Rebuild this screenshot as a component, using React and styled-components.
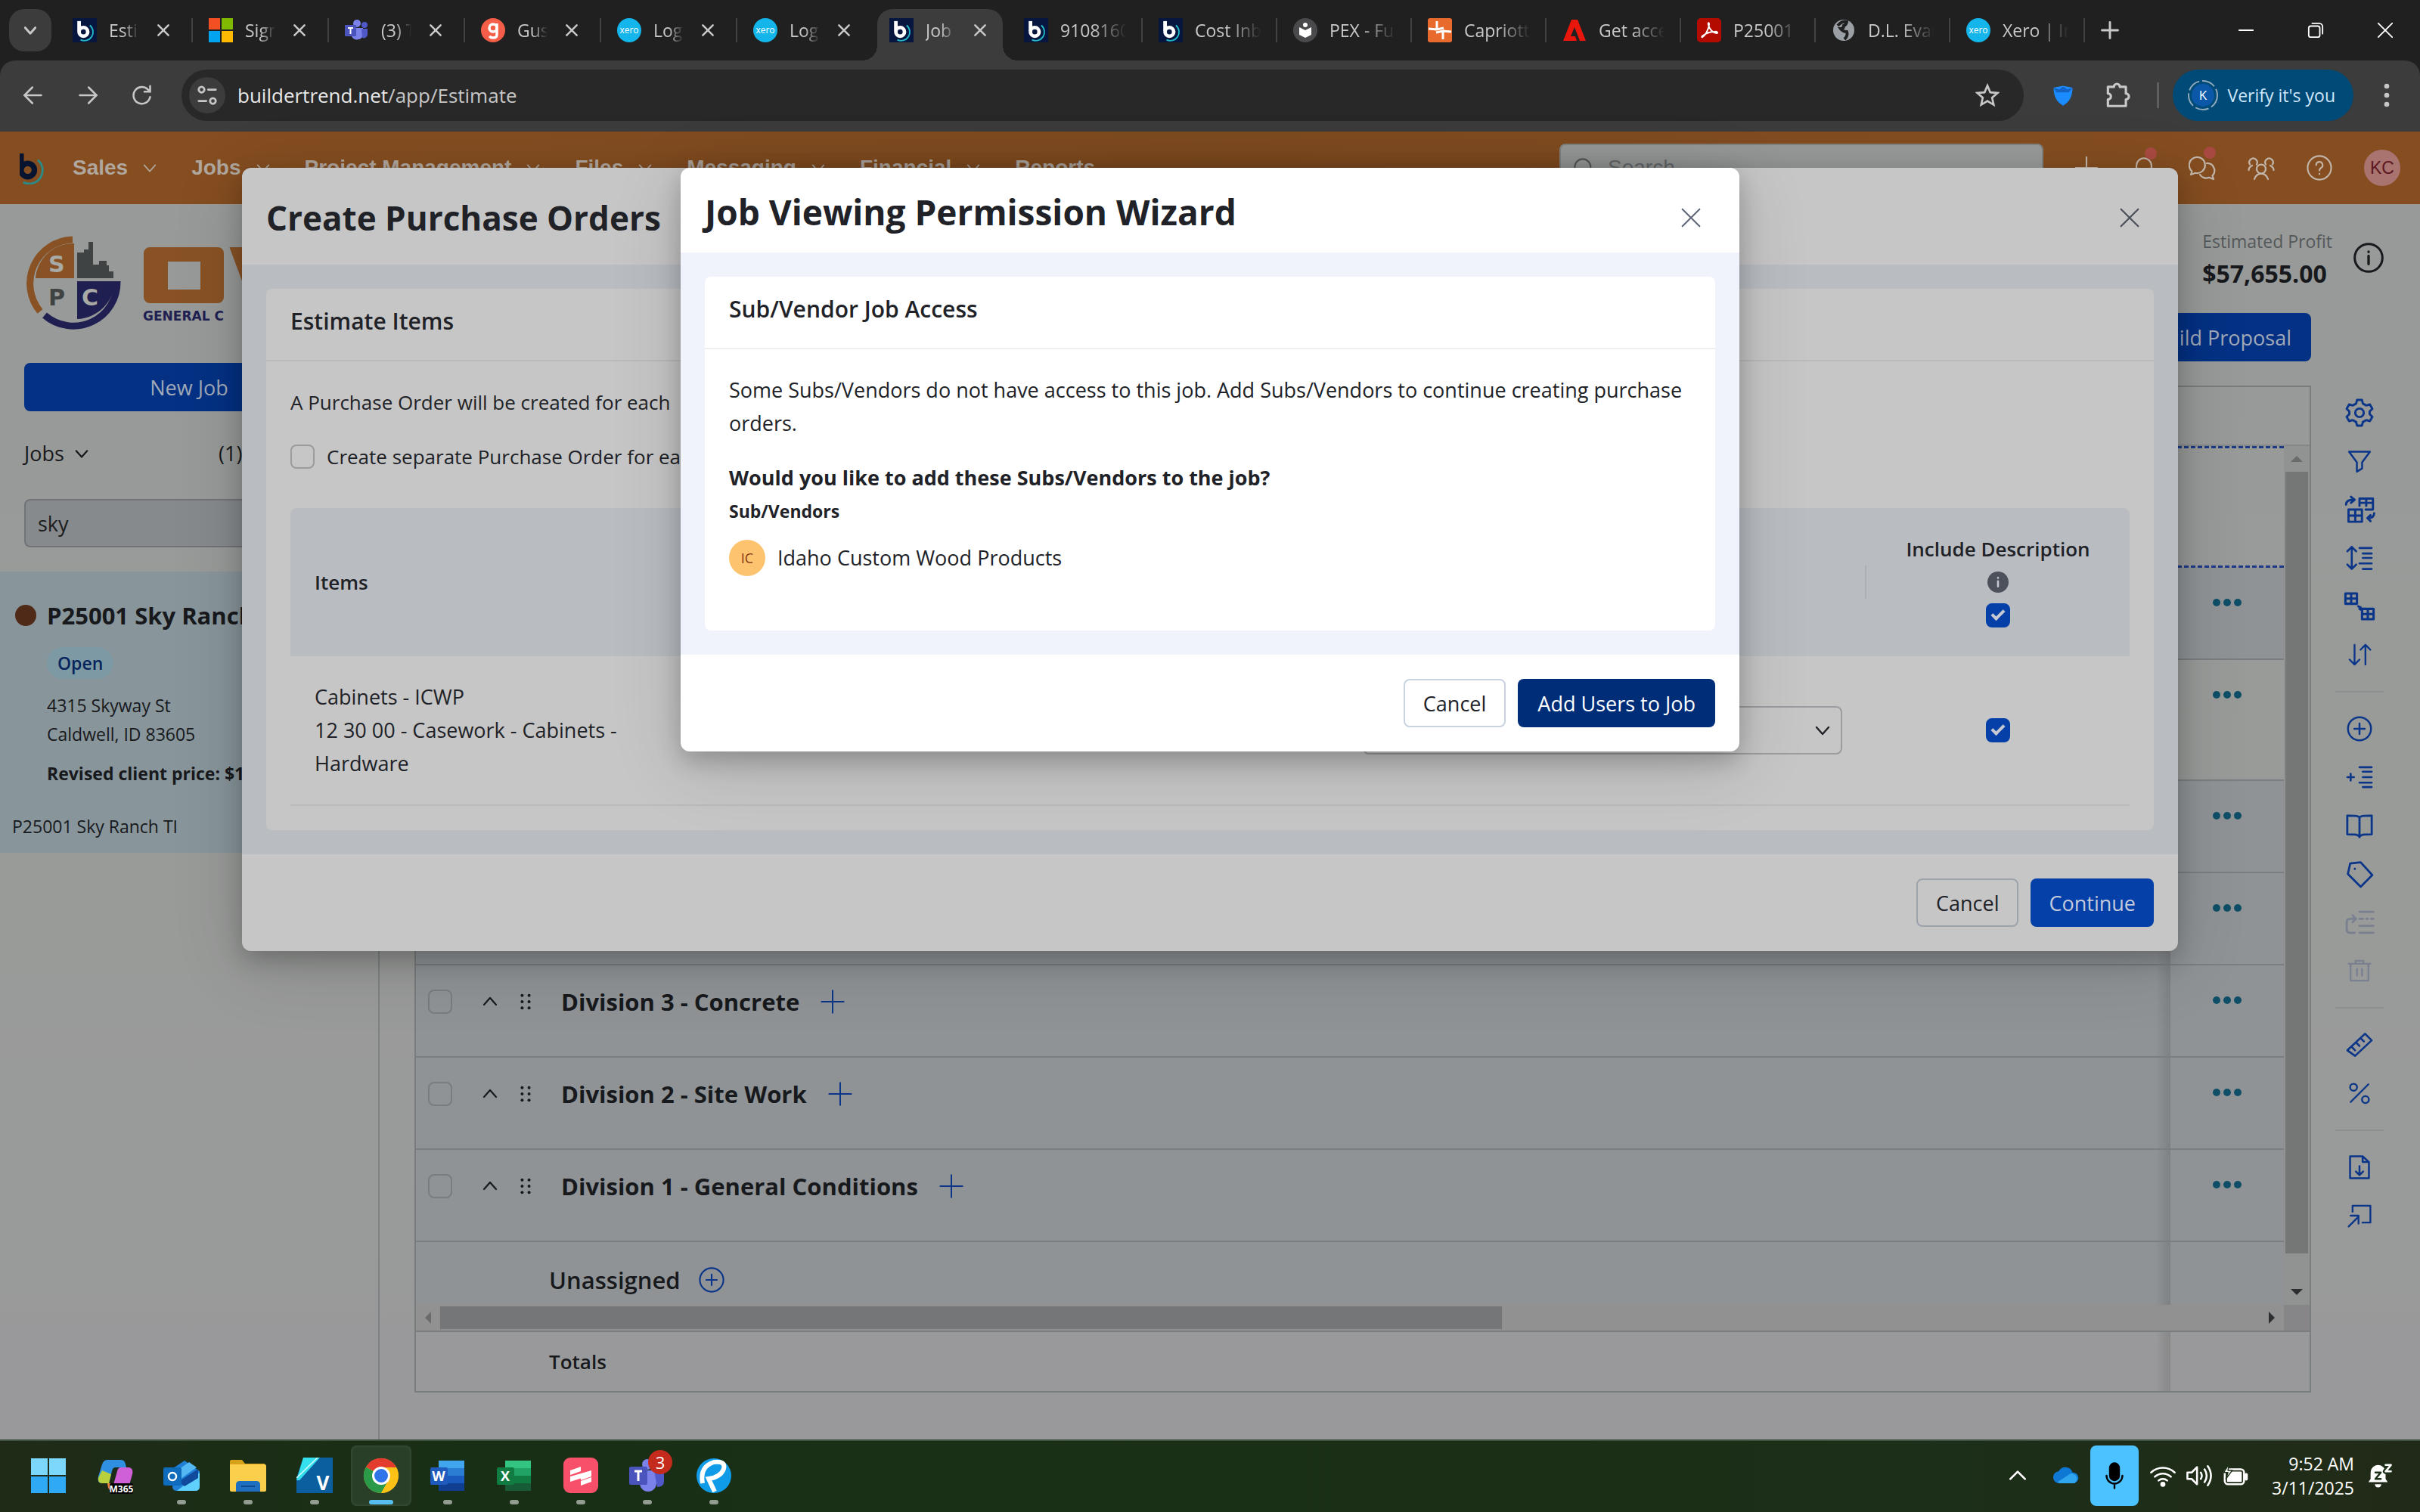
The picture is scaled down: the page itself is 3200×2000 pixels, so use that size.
import React from 'react';
import styled, { createGlobalStyle, css } from 'styled-components';

const GlobalStyle = createGlobalStyle`
  *, *::before, *::after { box-sizing: border-box; }
  body { margin: 0; background: #999b99; }
  body, button, input, select { font-family: 'Open Sans', 'Noto Sans', sans-serif; }
  h1, h2, h3, p { margin: 0; }
  button { margin: 0; padding: 0; border: 0; background: none; color: inherit; }
`;

const Screen = styled.div`
  display: flex;
  flex-direction: column;
  min-height: 100vh;
  overflow: hidden;
  font-size: 27px;
  line-height: 44px;
  color: #17191c;
`;

const IconSvg = styled.svg`
  display: block;
  flex: none;
  fill: none;
  stroke: currentColor;
  stroke-linecap: round;
  stroke-linejoin: round;
`;

function Icon({ size = 32, w = 1.5, children, box = '0 0 24 24', ...rest }) {
  return (
    <IconSvg width={size} height={size} viewBox={box} strokeWidth={w} aria-hidden="true" {...rest}>
      {children}
    </IconSvg>
  );
}

/* ---------- browser window ---------- */

const TabStrip = styled.div`
  display: flex;
  align-items: flex-start;
  height: 80px;
  padding: 12px 0 0 12px;
  background: #202020;
  color: #c9c9c9;
`;

const TabSearch = styled.button`
  display: grid;
  place-items: center;
  width: 56px;
  height: 56px;
  margin-right: 12px;
  border-radius: 20px;
  background: #3c3c3c;
`;

const Tab = styled.div`
  position: relative;
  display: flex;
  align-items: center;
  width: ${(p) => (p.$wide || p.$active ? 166 : 168)}px;
  height: 68px;
  padding: 0 0 12px 16px;
  border-radius: 20px 20px 0 0;
  background: ${(p) => (p.$active ? '#3c3c3c' : 'transparent')};
  ${(p) => p.$active && css`
    &::before, &::after {
      content: '';
      position: absolute;
      bottom: 0;
      width: 20px;
      height: 20px;
    }
    &::before { left: -20px; background: radial-gradient(circle at 0 0, #202020 20px, #3c3c3c 20px); }
    &::after { right: -20px; background: radial-gradient(circle at 100% 0, #202020 20px, #3c3c3c 20px); }
  `}
`;

const TabLabel = styled.span`
  flex: none;
  width: ${(p) => (p.$wide ? 88 : 40)}px;
  margin-left: 16px;
  overflow: hidden;
  white-space: nowrap;
  font-size: 23px;
  line-height: 32px;
  mask-image: linear-gradient(90deg, #000 50%, transparent);
`;

const TabClose = styled.button`
  margin-left: 22px;
`;

const TabGap = styled.span`
  width: 2px;
  height: 32px;
  margin: 12px 5px 0;
  background: ${(p) => (p.$hidden ? 'transparent' : '#414141')};
`;

const NewTab = styled.button`
  display: grid;
  place-items: center;
  width: 56px;
  height: 56px;
`;

const WindowButtons = styled.div`
  display: flex;
  margin-left: auto;
  color: #fff;
`;

const WindowButton = styled.button`
  display: grid;
  place-items: center;
  width: 92px;
  height: 56px;
`;

const ToolbarBack = styled.div`
  background: #202020;
`;

const Toolbar = styled.div`
  display: flex;
  align-items: center;
  padding: 12px 0 14px 8px;
  border-radius: 20px 20px 0 0;
  background: #3c3c3c;
  color: #c7c7c7;
`;

const ToolButton = styled.button`
  display: grid;
  place-items: center;
  width: ${(p) => (p.$wide ? 88 : 72)}px;
  height: 68px;
`;

const Omnibox = styled.div`
  display: flex;
  flex: 1;
  align-items: center;
  height: 68px;
  margin: 0 16px;
  padding: 0 32px 0 10px;
  border-radius: 34px;
  background: #282828;
`;

const SiteInfo = styled.button`
  display: grid;
  place-items: center;
  width: 48px;
  height: 48px;
  margin-right: 16px;
  border-radius: 50%;
  background: #3c3c3c;
`;

const Url = styled.div`
  flex: 1;
  font-size: 26px;
  color: #c7c7c7;
  b { font-weight: 400; color: #e9e9e9; }
`;

const ToolDivider = styled.span`
  width: 3px;
  height: 34px;
  margin: 0 18px 0 16px;
  background: #5f5f5f;
`;

const Verify = styled.button`
  display: flex;
  align-items: center;
  gap: 12px;
  height: 68px;
  padding: 0 24px 0 20px;
  border-radius: 34px;
  background: #004a77;
  color: #cfe7fb;
  font-size: 23px;
`;

/* ---------- application ---------- */

const AppArea = styled.div`
  position: relative;
  display: flex;
  flex: 1;
  flex-direction: column;
  background: linear-gradient(#979a98, #999b99 60%, #99999b);
`;

const Nav = styled.nav`
  display: flex;
  align-items: center;
  height: 96px;
  padding: 0 26px;
  background: linear-gradient(90deg, #864e20, #7f4b20 50%, #864e20);
  color: #b0a79f;
  font-family: 'Liberation Sans', sans-serif;
`;

const NavLinks = styled.div`
  display: flex;
  flex: 1;
  gap: 44px;
  margin-left: 34px;
`;

const NavLink = styled.a`
  display: flex;
  align-items: center;
  gap: 18px;
  color: inherit;
  font-size: 28px;
  font-weight: 700;
  text-decoration: none;
`;

const SearchBox = styled.label`
  display: flex;
  align-items: center;
  gap: 16px;
  width: 640px;
  height: 64px;
  padding-left: 16px;
  border: 2px solid #828481;
  border-radius: 8px;
  background: #979a98;
  color: #55595c;
  input {
    flex: 1;
    min-width: 0;
    border: 0;
    background: none;
    color: inherit;
    font-family: 'Liberation Sans', sans-serif;
    font-size: 28px;
  }
  input::placeholder { color: #66696c; opacity: 1; }
`;

const NavIcons = styled.div`
  display: flex;
  align-items: center;
  gap: 42px;
  margin-left: 40px;
`;

const NavButton = styled.button`
  position: relative;
  color: #c2b5aa;
  ${(p) => p.$alert && css`
    &::after {
      content: '';
      position: absolute;
      top: -10px;
      right: 0;
      width: 16px;
      height: 16px;
      border-radius: 50%;
      background: #a94a42;
    }
  `}
`;

const UserBadge = styled.button`
  width: 48px;
  height: 48px;
  border-radius: 50%;
  background: #a97370;
  color: #5c1720;
  font-family: 'Liberation Sans', sans-serif;
  font-size: 23px;
`;

const Columns = styled.div`
  display: flex;
  flex: 1;
`;

const Sidebar = styled.aside`
  width: 502px;
  padding-top: 42px;
  border-right: 2px solid #7f8283;
`;

const SidePad = styled.div`
  padding: 0 32px;
`;

const Logo = styled.svg`
  display: block;
  width: 436px;
  height: 128px;
  margin-bottom: 40px;
`;

const Primary = styled.button`
  height: 64px;
  padding: 0 ${(p) => (p.$padding || 24)}px;
  border-radius: 8px;
  background: ${(p) => p.$bg};
  color: ${(p) => p.$fg};
  font-size: 27px;
  ${(p) => p.$block && 'width: 100%;'}
`;

const JobsHead = styled.div`
  display: flex;
  margin: 36px 0 40px;
  line-height: 40px;
  span:first-child { display: flex; align-items: center; gap: 12px; width: 257px; }
`;

const JobSearch = styled.input`
  display: block;
  width: 100%;
  height: 64px;
  margin-bottom: 32px;
  padding: 0 16px;
  border: 2px solid #707476;
  border-radius: 8px;
  background: #868a8d;
  color: #1b1d20;
  font-size: 27px;
`;

const JobCard = styled.article`
  padding: 36px 16px 16px;
  background: #88959b;
  font-size: 23px;
  line-height: 38px;
`;

const JobTitle = styled.h2`
  display: flex;
  align-items: center;
  gap: 14px;
  margin-left: 4px;
  font-size: 31px;
  line-height: 44px;
  white-space: nowrap;
  &::before {
    content: '';
    width: 28px;
    height: 28px;
    border-radius: 50%;
    background: #4f2a16;
  }
`;

const JobDetail = styled.div`
  padding: 20px 0 0 46px;
  strong { display: block; margin: 14px 0 32px; }
`;

const Pill = styled.span`
  display: inline-block;
  margin-bottom: 16px;
  padding: 0 14px;
  border-radius: 21px;
  background: #7d99a3;
  color: #06245c;
  font-weight: 600;
  line-height: 42px;
  vertical-align: top;
`;

const Main = styled.main`
  display: flex;
  flex: 1;
  flex-direction: column;
  min-width: 0;
  padding: 28px 16px 56px 46px;
`;

const Summary = styled.div`
  display: flex;
  align-items: center;
  justify-content: flex-end;
  gap: 28px;
  height: 86px;
  padding-right: 32px;
  dl, dd { margin: 0; }
  dt { color: #55585b; font-size: 23px; line-height: 42px; }
  dd { font-size: 32px; font-weight: 700; }
`;

const Actions = styled.div`
  display: flex;
  justify-content: flex-end;
  margin: 30px 128px 32px 0;
`;

const Workspace = styled.div`
  display: flex;
`;

const Sheet = styled.div`
  flex: 1;
  min-width: 0;
  border: 2px solid #7a7d7e;
`;

const SheetHead = styled.div`
  height: 78px;
  border-bottom: 2px solid #858888;
`;

const SheetBody = styled.div`
  display: flex;
`;

const Grid = styled.table`
  flex: 1;
  border-collapse: collapse;
  td { padding: 0; vertical-align: top; }
`;

const GridRow = styled.tr`
  height: ${(p) => p.$height}px;
  background: ${(p) => (p.$plain ? 'transparent' : '#8f9396')};
  border-bottom: ${(p) => (p.$last ? 0 : 2)}px solid #7a7e82;
  ${(p) => p.$drop && css`
    border-top: 3px dashed #1c3a86;
    border-bottom: 3px dashed #1c3a86;
  `}
`;

const LabelCell = styled.td`
  background: linear-gradient(90deg, rgba(0, 0, 0, 0), rgba(0, 0, 0, 0.12)) right / 20px 100% no-repeat;
`;

const MoreCell = styled.td`
  width: 150px;
`;

const RowLine = styled.div`
  display: flex;
  align-items: center;
  padding: 26px 0 0 16px;
`;

const RowTitle = styled.span`
  margin: 0 28px 0 36px;
  font-size: 31px;
  font-weight: 700;
`;

const LooseTitle = styled.div`
  display: flex;
  align-items: center;
  gap: 24px;
  padding: 28px 0 0 176px;
  font-size: 31px;
  font-weight: 600;
`;

const RowButton = styled.button`
  margin-left: ${(p) => p.$gap || 0}px;
  color: ${(p) => p.$color || '#17191c'};
`;

const MoreButton = styled.button`
  display: block;
  margin: 26px auto 0;
  color: #0e4f67;
`;

const VScroll = styled.div`
  display: flex;
  flex-direction: column;
  align-items: center;
  width: 34px;
  background: #919393;
`;

const HScroll = styled.div`
  display: flex;
  height: 34px;
  background: #919192;
`;

const Arrow = styled.span`
  display: grid;
  place-items: center;
  width: 32px;
  height: 34px;
  color: ${(p) => (p.$dim ? '#6a6b6b' : '#2d2e2f')};
`;

const VThumb = styled.span`
  flex: 1;
  width: 30px;
  margin-bottom: 34px;
  background: #757676;
`;

const HThumb = styled.span`
  flex: 7;
  margin: 2px 0;
  background: #757677;
`;

const HTrack = styled.span`
  flex: 5;
`;

const Corner = styled.span`
  width: 34px;
  background: #868688;
`;

const Totals = styled.div`
  display: flex;
  height: 80px;
  border-top: 2px solid #7a7d7e;
  font-size: 26px;
  font-weight: 600;
  line-height: 78px;
`;

const TotalsLabel = styled.div`
  flex: 1;
  padding-left: 176px;
  background: linear-gradient(90deg, rgba(0, 0, 0, 0), rgba(0, 0, 0, 0.12)) right / 20px 100% no-repeat;
`;

const TotalsEnd = styled.div`
  width: 184px;
`;

const Rail = styled.div`
  display: flex;
  flex-direction: column;
  align-items: center;
  width: 128px;
  padding-top: 4px;
  color: #0b3588;
`;

const RailButton = styled.button`
  display: grid;
  place-items: center;
  width: 64px;
  height: 64px;
  color: ${(p) => (p.$off ? '#7a8090' : 'inherit')};
`;

const RailLine = styled.span`
  width: 64px;
  height: 2px;
  margin: 16px 0;
  background: #8c8f90;
`;

const Checkbox = styled.input`
  appearance: none;
  position: relative;
  flex: none;
  display: block;
  width: 32px;
  height: 32px;
  margin: 0;
  border: 2px solid ${(p) => p.$line || '#9b9b9b'};
  border-radius: 8px;
  background: transparent;
  &:checked { border-color: #0440a8; background: #0440a8; }
  &:checked::after {
    content: '';
    position: absolute;
    left: 9px;
    top: 3px;
    width: 10px;
    height: 17px;
    border: solid #c6c9d2;
    border-width: 0 4px 4px 0;
    transform: rotate(45deg);
  }
`;

/* ---------- dialogs ---------- */

const Layer = styled.div`
  position: absolute;
  inset: 0;
  padding: 48px 320px 0;
`;

const Dialog = styled.section`
  max-width: ${(p) => p.$max || 'none'};
  margin: 0 auto;
  border-radius: 12px;
  background: ${(p) => p.$bg};
  color: #202227;
  box-shadow: 0 12px 32px rgba(0, 0, 0, 0.22), 0 18px 96px rgba(0, 0, 0, 0.14);
`;

const DialogHead = styled.header`
  display: flex;
  align-items: center;
  justify-content: space-between;
  height: ${(p) => p.$height}px;
  padding: 4px 32px 0;
  h1 { font-size: ${(p) => p.$size}px; line-height: 64px; }
`;

const CloseButton = styled.button`
  display: grid;
  place-items: center;
  width: 64px;
  height: 64px;
  margin-top: ${(p) => (p.$low ? 16 : 0)}px;
  color: ${(p) => p.$color};
`;

const DialogBody = styled.div`
  padding: 32px;
  background: ${(p) => p.$bg};
`;

const Card = styled.div`
  border-radius: 8px;
  background: ${(p) => p.$bg};
`;

const CardHead = styled.h2`
  height: 96px;
  padding: 0 32px;
  border-bottom: 2px solid ${(p) => p.$line};
  font-size: 30px;
  font-weight: 600;
  line-height: 86px;
`;

const CardBody = styled.div`
  padding: 32px 32px ${(p) => p.$bottom}px;
`;

const Note = styled.p`
  font-size: 26px;
`;

const Tick = styled.label`
  display: flex;
  align-items: center;
  gap: 16px;
  margin: 28px 0 46px;
  font-size: 26px;
`;

const ItemsTable = styled.table`
  width: 100%;
  border-spacing: 0;
  table-layout: fixed;
  th {
    height: 196px;
    padding: 32px;
    background: #b9bdc2;
    font-size: 26px;
    font-weight: 600;
    text-align: left;
  }
  th:first-child { border-radius: 8px 0 0 0; }
  th:last-child { border-radius: 0 8px 0 0; }
  td {
    padding: 32px;
    border-bottom: 2px solid #b9babb;
  }
`;

const Col = styled.col`
  width: ${(p) => (p.$width ? `${p.$width}px` : 'auto')};
`;

const Divider = styled.span`
  display: block;
  width: 2px;
  height: 44px;
  margin: 0 -32px 0 auto;
  background: #abafb4;
`;

const CenterStack = styled.div`
  display: grid;
  grid-auto-rows: 44px;
  place-items: center;
  white-space: nowrap;
`;

const SelectWrap = styled.div`
  position: relative;
  select {
    appearance: none;
    display: block;
    width: 100%;
    height: 64px;
    padding: 0 64px 0 16px;
    border: 2px solid #9a9c9f;
    border-radius: 8px;
    background: transparent;
    font-size: 27px;
  }
  svg { position: absolute; right: 14px; top: 20px; }
`;

const DialogFoot = styled.footer`
  display: flex;
  justify-content: flex-end;
  gap: 16px;
  padding: 32px;
`;

const Outline = styled.button`
  height: 64px;
  padding: 0 24px;
  border: 2px solid ${(p) => p.$line};
  border-radius: 8px;
  font-size: 27px;
`;

const Question = styled.h3`
  margin-top: 28px;
  font-size: 27px;
`;

const SmallTitle = styled.h3`
  font-size: 23px;
`;

const Vendor = styled.div`
  display: flex;
  align-items: center;
  gap: 16px;
  margin-top: 16px;
`;

const Initials = styled.span`
  width: 48px;
  height: 48px;
  border-radius: 50%;
  background: #fdc36f;
  color: #8a3a12;
  font-size: 18px;
  line-height: 48px;
  text-align: center;
`;

/* ---------- taskbar ---------- */

const Taskbar = styled.footer`
  display: flex;
  align-items: flex-start;
  height: 96px;
  padding: 6px 32px 0 20px;
  border-top: 2px solid #3f5242;
  background: linear-gradient(90deg, #1f2b17, #182f15 20%, #1c2f18 80%, #212a18);
  color: #fff;
`;

const AppButton = styled.button`
  position: relative;
  display: grid;
  place-items: center;
  width: 80px;
  height: 80px;
  margin: 0 4px;
  border-radius: 8px;
  ${(p) => p.$active && 'background: #2a3f28; box-shadow: inset 0 0 0 2px #334831;'}
  ${(p) => p.$running && css`
    &::after {
      content: '';
      position: absolute;
      bottom: 2px;
      width: ${p.$active ? 32 : 12}px;
      height: 6px;
      border-radius: 3px;
      background: ${p.$active ? '#55bdf0' : '#929c90'};
    }
  `}
`;

const Count = styled.span`
  position: absolute;
  top: 6px;
  right: 7px;
  width: 32px;
  height: 32px;
  border-radius: 50%;
  background: #c42b1c;
  font-size: 22px;
  line-height: 32px;
`;

const Tray = styled.div`
  display: flex;
  align-items: center;
  height: 80px;
  margin-left: auto;
`;

const TrayButton = styled.button`
  display: grid;
  place-items: center;
  width: ${(p) => p.$width}px;
  height: 80px;
  ${(p) => p.$lit && 'margin-right: 8px; border-radius: 8px; background: #4cc2ff; color: #000;'}
`;

const Clock = styled.time`
  margin: 0 11px 0 24px;
  font-size: 23px;
  line-height: 32px;
  text-align: right;
  white-space: pre-line;
`;

/* ---------- drawings ---------- */

const X = (p) => <Icon {...p}><path d="M4 4l16 16M20 4L4 20" /></Icon>;
const Down = (p) => <Icon {...p}><path d="M4 8l8 9 8-9" /></Icon>;

const BLetter = ({ fg, ring }) => (
  <>
    <path d="M8 2v14" stroke={fg} strokeWidth="5" fill="none" />
    <circle cx="14" cy="17" r="6" stroke={fg} strokeWidth="5" fill="none" />
    <path d="M23 8a12 12 0 0 1-13 20" stroke={ring} strokeWidth="2" fill="none" />
  </>
);

const favicons = {
  bt: <><rect width="32" height="32" fill="#07163f" /><g transform="translate(1 2) scale(.95)"><BLetter fg="#fff" ring="#21b8c7" /></g></>,
  ms: <><path d="M0 0h15v15H0z" fill="#f25022" /><path d="M17 0h15v15H17z" fill="#7fba00" /><path d="M0 17h15v15H0z" fill="#00a4ef" /><path d="M17 17h15v15H17z" fill="#ffb900" /></>,
  teams: <><circle cx="16" cy="7" r="5" fill="#7b83eb" /><circle cx="26" cy="9" r="4" fill="#5059c9" /><path d="M9 13h15v9a8 8 0 0 1-15 2z" fill="#7b83eb" /><path d="M22 14h8v8a5 5 0 0 1-7 4z" fill="#5059c9" /><rect y="9" width="15" height="15" rx="1" fill="#4b53bc" /><path d="M4 13h7M7.500 13v8" stroke="#fff" strokeWidth="2" /></>,
  gusto: <><circle cx="16" cy="16" r="16" fill="#f45d48" /><circle cx="16" cy="13" r="5" stroke="#fff" strokeWidth="3.500" fill="none" /><path d="M21 7v15q0 4-5 4-3 0-5-2" stroke="#fff" strokeWidth="3.500" fill="none" /></>,
  xero: <><circle cx="16" cy="16" r="16" fill="#13b5ea" /><text x="16" y="20" fontSize="12" fontFamily="Open Sans" textAnchor="middle" fill="#fff">xero</text></>,
  pex: <><circle cx="16" cy="16" r="16" fill="#4a4a4c" /><circle cx="16" cy="9" r="3" fill="#fff" /><path d="M8 12l8 4 8-4v10l-8 4-8-4z" fill="#fff" /></>,
  cap: <><rect width="32" height="32" rx="3" fill="#e86a2c" /><path d="M12 4v11l9-2M20 28V17l-9 2M1 14l11 1M31 18l-11-1" stroke="#fff" strokeWidth="3" fill="none" /></>,
  adobe: <path d="M12 2h8l11 28h-8l-7-18-5 12h6l2 6H1z" fill="#e9170b" />,
  pdf: <><rect width="32" height="32" rx="5" fill="#b30b00" /><path d="M7 25c4-2 9-11 9-17 0-3-2-2-1 1 2 7 6 10 11 11 2 0 1-3-3-2-6 0-11 2-15 5-2 1-2 3-1 2z" stroke="#fff" strokeWidth="2" fill="none" /></>,
  globe: <><circle cx="16" cy="16" r="14" fill="#9aa0a6" /><path d="M8 10q6-7 12-5-1 4-4 5 0 4-4 4 3 4 8 4 2 5-3 10" stroke="#202020" strokeWidth="4" fill="none" /></>,
};

const tabs = [
  ['bt', 'Esti'], ['ms', 'Sign'], ['teams', '(3) T'], ['gusto', 'Gus'], ['xero', 'Log'], ['xero', 'Log'],
  ['bt', 'Job', 'active'], ['bt', '9108160', 'wide'], ['bt', 'Cost Inb', 'wide'], ['pex', 'PEX - Fu', 'wide'],
  ['cap', 'Capriott', 'wide'], ['adobe', 'Get acce', 'wide'], ['pdf', 'P25001', 'wide'],
  ['globe', 'D.L. Evar', 'wide'], ['xero', 'Xero | In', 'wide'],
];

function Browser() {
  return (
    <header>
      <TabStrip>
        <TabSearch aria-label="Search tabs"><Down size={20} w={3.5} /></TabSearch>
        {tabs.map(([icon, label, kind], i) => (
          <React.Fragment key={i}>
            <Tab $wide={kind === 'wide'} $active={kind === 'active'}>
              <svg width="32" height="32" viewBox="0 0 32 32" aria-hidden="true">{favicons[icon]}</svg>
              <TabLabel $wide={kind === 'wide'}>{label}</TabLabel>
              {kind !== 'wide' && <TabClose aria-label="Close tab"><X size={20} w={3} /></TabClose>}
            </Tab>
            <TabGap $hidden={i === 5 || i === 6} />
          </React.Fragment>
        ))}
        <NewTab aria-label="New tab"><Icon size={28} w={2.5}><path d="M12 3v18M3 12h18" /></Icon></NewTab>
        <WindowButtons>
          <WindowButton aria-label="Minimize"><Icon size={22} w={2}><path d="M2 12h20" /></Icon></WindowButton>
          <WindowButton aria-label="Restore"><Icon size={22} w={2}><rect x="2" y="6" width="16" height="16" rx="3" /><path d="M7 2h10a5 5 0 0 1 5 5v10" /></Icon></WindowButton>
          <WindowButton aria-label="Close"><Icon size={22} w={2}><path d="M2 2l20 20M22 2L2 22" /></Icon></WindowButton>
        </WindowButtons>
      </TabStrip>
      <ToolbarBack>
        <Toolbar>
          <ToolButton aria-label="Back"><Icon size={28} w={2.2}><path d="M21 12H3M11 3l-9 9 9 9" strokeLinejoin="miter" /></Icon></ToolButton>
          <ToolButton aria-label="Forward"><Icon size={28} w={2.2}><path d="M3 12h18M13 3l9 9-9 9" strokeLinejoin="miter" /></Icon></ToolButton>
          <ToolButton aria-label="Reload"><Icon size={28} w={2.2}><path d="M21 14a9.500 9.500 0 1 1-2.500-8.500L21 8M21 1.500V8h-6.500" strokeLinejoin="miter" /></Icon></ToolButton>
          <Omnibox>
            <SiteInfo aria-label="Site information"><Icon size={30} w={2.2}><circle cx="6" cy="6" r="3" /><path d="M13 6h8M3 18h8" /><circle cx="18" cy="18" r="3" /></Icon></SiteInfo>
            <Url><b>buildertrend.net</b>/app/Estimate</Url>
            <button aria-label="Bookmark"><Icon size={32} w={2}><path d="M12 2.500l2.800 6.600 7.200.6-5.400 4.700 1.600 7-6.200-3.700-6.200 3.700 1.600-7L2 9.700l7.200-.6z" strokeLinejoin="miter" /></Icon></button>
          </Omnibox>
          <ToolButton aria-label="Shield"><Icon size={30} stroke="none"><path d="M2 4l10-2 10 2c0 9-3 15-10 19C5 19 2 13 2 4z" fill="#1a8cff" stroke="none" /><path d="M2 4l6 2 4-3 5 3 5-2-4 5H5z" fill="#1263c4" stroke="none" /></Icon></ToolButton>
          <ToolButton aria-label="Extensions"><Icon size={38} w={2}><path d="M4 5h5a2 2 0 0 1 5 0h5v5.500a2 2 0 0 1 0 5V21H4v-5.500a2.500 2.500 0 0 0 0-5z" /></Icon></ToolButton>
          <ToolDivider />
          <Verify>
            <svg width="40" height="40" viewBox="0 0 40 40" aria-hidden="true">
              <circle cx="20" cy="20" r="19" fill="none" stroke="#8fa9bd" strokeWidth="2" strokeDasharray="18 4" />
              <circle cx="20" cy="20" r="15" fill="#0b57a8" />
              <text x="20" y="26" fontSize="17" fontFamily="Open Sans" textAnchor="middle" fill="#fff">K</text>
            </svg>
            Verify it's you
          </Verify>
          <ToolButton $wide aria-label="Menu"><Icon size={32}><g fill="currentColor" stroke="none"><circle cx="12" cy="3" r="2.500" /><circle cx="12" cy="12" r="2.500" /><circle cx="12" cy="21" r="2.500" /></g></Icon></ToolButton>
        </Toolbar>
      </ToolbarBack>
    </header>
  );
}

const navItems = ['Sales', 'Jobs', 'Project Management', 'Files', 'Messaging', 'Financial', 'Reports'];

function TopNav() {
  return (
    <Nav>
      <svg width="36" height="44" viewBox="7 0 24 30" role="img" aria-label="Home"><BLetter fg="#07142f" ring="#2b8a86" /></svg>
      <NavLinks>
        {navItems.map((n) => (
          <NavLink key={n} href="#">{n}{n !== 'Reports' && <Down size={22} w={1.8} />}</NavLink>
        ))}
      </NavLinks>
      <SearchBox>
        <Icon size={28} w={1.8}><circle cx="11" cy="11" r="9" /><path d="M18 18l5 5" /></Icon>
        <input type="search" placeholder="Search" aria-label="Search" />
      </SearchBox>
      <NavIcons>
        <NavButton aria-label="Add"><Icon size={34}><path d="M12 2v20M2 12h20" /></Icon></NavButton>
        <NavButton $alert aria-label="Notifications"><Icon size={34}><path d="M5 18v-8a7 7 0 0 1 14 0v8M3 18h18M10 21h4" /></Icon></NavButton>
        <NavButton $alert aria-label="Messages"><Icon size={36}><path d="M3 15l-1 3 4-1.500A7 7 0 1 0 3 15z" /><path d="M16 8a6.500 6.500 0 0 1 5 11l1 3-4-1.500A6.500 6.500 0 0 1 10 18" /></Icon></NavButton>
        <NavButton aria-label="People"><Icon size={36}><circle cx="12" cy="13" r="4" /><path d="M6 22c1-3 3-5 6-5s5 2 6 5M8 9a3.500 3.500 0 1 0-6 0M4 10c-2 1-3 2-3 4M16 9a3.500 3.500 0 1 1 6 0M20 10c2 1 3 2 3 4" /></Icon></NavButton>
        <NavButton aria-label="Help"><Icon size={34}><circle cx="12" cy="12" r="11" /><path d="M9 9.500a3 3 0 1 1 4.500 2.500c-1 .6-1.500 1.200-1.500 2.500M12 17.600v.3" /></Icon></NavButton>
        <UserBadge>KC</UserBadge>
      </NavIcons>
    </Nav>
  );
}

function CompanyLogo() {
  return (
    <Logo viewBox="0 0 436 128" role="img" aria-label="SPC General Contractors">
      <path d="M21 100A58 58 0 0 1 64 5" fill="none" stroke="#885225" strokeWidth="9" />
      <path d="M66 10v46H15A50 50 0 0 1 66 10z" fill="#885225" />
      <path d="M70 56V22h9V18h6V8h6v30h8v-5h10v6h3v8h6v9z" fill="#3f4343" />
      <path d="M70 60h50a52 52 0 0 1-50 50z" fill="#1f1f52" />
      <path d="M27 105A58 58 0 0 0 123 60" fill="none" stroke="#1f1f52" strokeWidth="9" />
      <g fontFamily="DejaVu Sans" fontWeight="700" fontSize="30">
        <text x="32" y="48" fill="#a9a9a5">S</text>
        <text x="32" y="92" fill="#3f4343">P</text>
        <text x="76" y="92" fill="#a9a9a5">C</text>
      </g>
      <path fillRule="evenodd" d="M166 15h90a8 8 0 0 1 8 8v58a8 8 0 0 1-8 8h-90a8 8 0 0 1-8-8V23a8 8 0 0 1 8-8zM190 34v37h43V34z" fill="#885225" />
      <text x="271" y="88" fontFamily="DejaVu Sans" fontWeight="700" fontSize="100" fill="#885225">V</text>
      <text x="157" y="112" fontFamily="DejaVu Sans" fontWeight="700" fontSize="17" fill="#1f1f52">GENERAL C</text>
    </Logo>
  );
}

function JobList() {
  return (
    <Sidebar>
      <SidePad>
        <CompanyLogo />
        <Primary $block $bg="#043184" $fg="#a0a9b9">New Job</Primary>
        <JobsHead><span>Jobs <Down size={22} w={2.4} /></span><span>(1)</span></JobsHead>
        <JobSearch defaultValue="sky" aria-label="Search jobs" />
      </SidePad>
      <JobCard>
        <JobTitle>P25001 Sky Ranch TI</JobTitle>
        <JobDetail>
          <Pill>Open</Pill>
          <div>4315 Skyway St</div>
          <div>Caldwell, ID 83605</div>
          <strong>Revised client price: $1</strong>
        </JobDetail>
        <p>P25001 Sky Ranch TI</p>
      </JobCard>
    </Sidebar>
  );
}

const Dots = () => (
  <MoreCell>
    <MoreButton aria-label="More actions">
      <Icon size={40} box="0 0 40 32">
        <g fill="currentColor" stroke="none"><circle cx="6" cy="16" r="5" /><circle cx="20" cy="16" r="5" /><circle cx="34" cy="16" r="5" /></g>
      </Icon>
    </MoreButton>
  </MoreCell>
);

const coveredRows = [122, 160, 122, 122];
const divisions = ['Division 3 - Concrete', 'Division 2 - Site Work', 'Division 1 - General Conditions'];

const Tri = ({ d, dim }) => (
  <Arrow $dim={dim}><svg width="16" height="16" viewBox="0 0 16 16" aria-hidden="true"><path d={d} fill="currentColor" /></svg></Arrow>
);

const BLUE = '#0b3588';

function Estimate() {
  return (
    <Sheet>
      <SheetHead />
      <SheetBody>
        <Grid>
          <tbody>
            <GridRow $height={158} $plain $drop><td /><MoreCell /></GridRow>
            {coveredRows.map((h, i) => (
              <GridRow key={i} $height={h} $plain={h === 160}><LabelCell /><Dots /></GridRow>
            ))}
            {divisions.map((d) => (
              <GridRow key={d} $height={122}>
                <LabelCell>
                  <RowLine>
                    <Checkbox type="checkbox" $line="#7a7d7e" aria-label={d} />
                    <RowButton $gap={38} aria-label="Collapse"><Icon size={24} w={2.2}><path d="M4 16l8-9 8 9" /></Icon></RowButton>
                    <RowButton $gap={24} aria-label="Drag"><Icon size={22} box="0 0 16 24">
                      {[3, 12, 21].map((y) => <g key={y} fill="currentColor" stroke="none"><circle cx="3" cy={y} r="2.200" /><circle cx="13" cy={y} r="2.200" /></g>)}
                    </Icon></RowButton>
                    <RowTitle>{d}</RowTitle>
                    <RowButton $color={BLUE} aria-label="Add"><Icon size={32}><path d="M12 1v22M1 12h22" /></Icon></RowButton>
                  </RowLine>
                </LabelCell>
                <Dots />
              </GridRow>
            ))}
            <GridRow $height={84} $last>
              <LabelCell>
                <LooseTitle>
                  Unassigned
                  <RowButton $color={BLUE} aria-label="Add item"><Icon size={34}><circle cx="12" cy="12" r="11" /><path d="M12 7v10M7 12h10" /></Icon></RowButton>
                </LooseTitle>
              </LabelCell>
              <MoreCell />
            </GridRow>
          </tbody>
        </Grid>
        <VScroll>
          <Tri dim d="M0 12l8-8 8 8z" />
          <VThumb />
          <Tri d="M0 4l8 8 8-8z" />
        </VScroll>
      </SheetBody>
      <HScroll>
        <Tri dim d="M12 0L4 8l8 8z" />
        <HThumb />
        <HTrack />
        <Tri d="M4 0l8 8-8 8z" />
        <Corner />
      </HScroll>
      <Totals><TotalsLabel>Totals</TotalsLabel><TotalsEnd /></Totals>
    </Sheet>
  );
}

const railItems = [
  ['Settings', <path key="a" d="M12 8.500a3.500 3.500 0 1 0 0 7 3.500 3.500 0 0 0 0-7zM10 1.500h4l.8 3 2.700 1.500 3-.8 2 3.500-2.200 2.200v2.200l2.200 2.200-2 3.500-3-.8-2.700 1.500-.8 3h-4l-.8-3L6.500 18l-3 .8-2-3.500 2.200-2.200v-2.200L1.500 8.700l2-3.500 3 .8 2.700-1.500z" />, 42],
  ['Filter', <path key="a" d="M2 3h20l-7.500 10v6L9.500 22v-9z" />, 36],
  ['Swap columns', <path key="a" d="M3 12h11v10H3zM3 17h11M8.500 12v10M12 9V3h11v9h-6M12 6.500h11M17.500 3v6M1 8c0-3 2-4 6-4M5 1.500L8 4 5 6.500M24 15c0 3-2 4-5 4M21 16.500L18.500 19l2.500 2.500" />, 42],
  ['Row height', <path key="a" d="M5 2v20M1 6l4-4 4 4M1 18l4 4 4-4M12 3h11M15 8h8M15 12h8M12 17h11M15 22h8" />, 38],
  ['Group', <path key="a" d="M1 2h9v8H1zM1 6h9M5.500 2v8M14 14h9v8h-9zM14 18h9M18.500 14v8M11 12l2 1-1 1 2 1" />, 44],
  ['Sort', <path key="a" d="M7 2v20M2 17l5 5 5-5M18 22V2M13 7l5-5 5 5" />, 34],
  null,
  ['Add', <path key="a" d="M12 1a11 11 0 1 0 0 22 11 11 0 0 0 0-22zM12 7v10M7 12h10" />, 36],
  ['Add row', <path key="a" d="M1 12h6M4 9v6M12 3h11M15 7h8M15 12h8M12 17h11M15 21h8" />, 38],
  ['Catalog', <path key="a" d="M12 5C10 3.500 8 3.500 1.500 3.500v16C8 19.500 10 19.500 12 21.500M12 5c2-1.500 4-1.500 10.500-1.500v16C16 19.500 14 19.500 12 21.500M12 5v17" />, 40],
  ['Tag', <path key="a" d="M2 12L4 3l9-1 10 11-10 10zM8 7.500v.2" />, 40],
  ['Move', <path key="a" d="M12 3h12M12 9h3M18 9h1M22 9h2M12 15h12M12 21h12M8 21H4q-3 0-3-3v-6q0-3 3-3h5M6 6l3 3-3 3" />, 40, true],
  ['Delete', <path key="a" d="M1 5h22M3 5v17h18V5M8 5V2h8v3M9.500 10v7M14.500 10v7" />, 34, true],
  null,
  ['Takeoff', <path key="a" d="M1 17L17 2l6 6L8 22zM5 14l3 3M9 10l3 3M13 6l3 3" />, 38],
  ['Percent', <path key="a" d="M21 3L3 21M6 2.500a3.500 3.500 0 1 0 0 7 3.500 3.500 0 0 0 0-7zM18 15a3.500 3.500 0 1 0 0 7 3.500 3.500 0 0 0 0-7z" />, 34],
  null,
  ['Import', <path key="a" d="M3 1.500h12L21 7v15.500H3zM15 1.500V7h6M12 11v8M8.500 16l3.500 3.500 3.500-3.500" />, 36],
  ['Export', <path key="a" d="M5 8V2h18v17h-8M1 23l10-10M3 12h8v8" />, 34],
];

function Tools() {
  return (
    <Rail>
      {railItems.map((r, i) => (r
        ? <RailButton key={i} aria-label={r[0]} $off={r[3]}><Icon size={r[2]} w={1.8} box="-1 -1 26 26">{r[1]}</Icon></RailButton>
        : <RailLine key={i} />))}
    </Rail>
  );
}

function PurchaseOrders() {
  return (
    <Layer>
      <Dialog $bg="#c6c6c6" role="dialog" aria-label="Create Purchase Orders">
        <DialogHead $height={128} $size={44}>
          <h1>Create Purchase Orders</h1>
          <CloseButton $color="#4a4e58" aria-label="Close"><X size={34} w={1.5} /></CloseButton>
        </DialogHead>
        <DialogBody $bg="#b9bdc2">
          <Card $bg="#c6c6c6">
            <CardHead $line="#b8b9ba">Estimate Items</CardHead>
            <CardBody $bottom={32}>
              <Note>A Purchase Order will be created for each</Note>
              <Tick><Checkbox type="checkbox" />Create separate Purchase Order for each</Tick>
              <ItemsTable>
                <colgroup><Col $width={486} /><Col /><Col $width={698} /><Col $width={348} /></colgroup>
                <thead>
                  <tr>
                    <th>Items</th>
                    <th aria-label="Vendor" />
                    <th aria-label="Assignment"><Divider /></th>
                    <th>
                      <CenterStack>
                        <span>Include Description</span>
                        <Icon size={28}><circle cx="12" cy="12" r="12" fill="#4d515b" stroke="none" /><path d="M12 11v6M12 7v.3" stroke="#c6c9d2" strokeWidth="2.200" /></Icon>
                        <Checkbox type="checkbox" defaultChecked aria-label="Include all descriptions" />
                      </CenterStack>
                    </th>
                  </tr>
                </thead>
                <tbody>
                  <tr>
                    <td>Cabinets - ICWP<br />12 30 00 - Casework - Cabinets - Hardware</td>
                    <td />
                    <td>
                      <SelectWrap>
                        <select aria-label="Assigned to"><option /></select>
                        <Down size={24} w={2.4} />
                      </SelectWrap>
                    </td>
                    <td><CenterStack><Checkbox type="checkbox" defaultChecked aria-label="Include description" /></CenterStack></td>
                  </tr>
                </tbody>
              </ItemsTable>
            </CardBody>
          </Card>
        </DialogBody>
        <DialogFoot>
          <Outline $line="#9da3aa">Cancel</Outline>
          <Primary $bg="#0440a8" $fg="#c3cadb">Continue</Primary>
        </DialogFoot>
      </Dialog>
    </Layer>
  );
}

function PermissionWizard() {
  return (
    <Layer>
      <Dialog $bg="#fff" $max="1400px" role="dialog" aria-label="Job Viewing Permission Wizard">
        <DialogHead $height={112} $size={46}>
          <h1>Job Viewing Permission Wizard</h1>
          <CloseButton $low $color="#62677a" aria-label="Close"><X size={34} w={1.5} /></CloseButton>
        </DialogHead>
        <DialogBody $bg="#f0f3fb">
          <Card $bg="#fff">
            <CardHead $line="#eceef0">Sub/Vendor Job Access</CardHead>
            <CardBody $bottom={72}>
              <p>Some Subs/Vendors do not have access to this job. Add Subs/Vendors to continue creating purchase orders.</p>
              <Question>Would you like to add these Subs/Vendors to the job?</Question>
              <SmallTitle>Sub/Vendors</SmallTitle>
              <Vendor><Initials>IC</Initials>Idaho Custom Wood Products</Vendor>
            </CardBody>
          </Card>
        </DialogBody>
        <DialogFoot>
          <Outline $line="#c9d3e0">Cancel</Outline>
          <Primary $padding={26} $bg="#002d78" $fg="#fff">Add Users to Job</Primary>
        </DialogFoot>
      </Dialog>
    </Layer>
  );
}

const Office = ({ letter, shades, plate }) => (
  <>
    <path d="M12 4h34v10H12z" fill={shades[0]} /><path d="M12 14h34v10H12z" fill={shades[1]} />
    <path d="M12 24h34v10H12z" fill={shades[2]} /><path d="M12 34h34v10H12z" fill={shades[3]} />
    <rect x="1" y="13" width="23" height="23" rx="2" fill={plate} />
    <text x="12" y="31" fontSize="18" fontWeight="700" fontFamily="Open Sans" textAnchor="middle" fill="#fff">{letter}</text>
  </>
);

const apps = [
  ['Start', false, <><path d="M1 1h22v22H1zM25 1h22v22H25z" fill="#7dd6fb" /><path d="M1 25h22v22H1zM25 25h22v22H25z" fill="#2fa8f5" /></>],
  ['Copilot', false, <><path d="M14 3h18q5 0 6 6l1 4H25q-4 0-5 5l-4 16H7q-7 0-5-9l5-16Q9 3 14 3z" fill="#2f8fe0" /><path d="M7 17l-5 10q-1 7 5 7h9l3-12z" fill="#b8cf3e" /><path d="M32 13h9q8 0 6 9l-4 14H22l5-18q1-5 5-5z" fill="#d060d8" /><path d="M14 34h12l-4 11q-7 1-8-11z" fill="#f2813c" /><rect x="17" y="34" width="31" height="14" rx="2" fill="#000" /><text x="32.500" y="46" fontSize="12" fontWeight="700" fontFamily="Open Sans" textAnchor="middle" fill="#fff">M365</text></>],
  ['Outlook', true, <><path d="M10 16L28 4l20 14v20q0 6-6 6H18q-6 0-6-6z" fill="#1f7fd6" /><path d="M14 20L34 6l10 7-28 20z" fill="#55b8f2" /><path d="M48 20v18q0 6-6 6H18z" fill="#5fd0fb" /><path d="M20 32L46 15v12L28 38z" fill="#0f4a9c" /><rect y="13" width="24" height="24" rx="2" fill="#0f6cbd" /><circle cx="12" cy="25" r="5" fill="none" stroke="#fff" strokeWidth="2.500" /></>],
  ['Explorer', true, <><path d="M0 5q0-2 2-2h14l4 5h26v8H0z" fill="#d9a11a" /><path d="M0 9h46q2 0 2 2v32q0 2-2 2H2q-2 0-2-2z" fill="#fbcf4c" /><path d="M8 45V36q0-5 5-5h22q5 0 5 5v9z" fill="#1e6fc0" /><path d="M15 38h18" stroke="#0f4a8c" strokeWidth="2" /></>],
  ['Viewpoint', true, <><path d="M9 0h39v47H0V27z" fill="#0b5f9e" /><path d="M9 0h22L4 30H0z" fill="#35e0ee" /><path d="M0 27L28 0" stroke="#d8fbff" strokeWidth="1.500" /><text x="35" y="43" fontSize="26" fontWeight="700" fontFamily="Open Sans" textAnchor="middle" fill="#fff">V</text></>],
  ['Chrome', true, <><circle cx="24" cy="24" r="23" fill="#fbc116" /><path d="M24 24L4 12.500a23 23 0 0 1 40 0z" fill="#e33b2e" /><path d="M24 24L4 12.500A23 23 0 0 0 24 47l10-17z" fill="#2b9a48" /><path d="M24 13h20A23 23 0 0 1 24 47l9.500-17z" fill="#fbc116" /><circle cx="24" cy="24" r="12" fill="#fff" /><circle cx="24" cy="24" r="9" fill="#2f74e8" /></>, 'active'],
  ['Word', true, <Office letter="W" shades={['#41a5ee', '#2b7cd3', '#185abd', '#103f91']} plate="#1e5bbd" />],
  ['Excel', true, <Office letter="X" shades={['#33c481', '#21a366', '#107c41', '#185c37']} plate="#107c41" />],
  ['Recorder', true, <><rect x="1" width="46" height="47" rx="9" fill="#f8506a" /><path d="M10 17l14-5v6l-14 5zM24 24l14-5v6l-14 5zM10 25l28-8v6l-28 9zM24 31l14-5v6l-14 5z" fill="#fff" /></>],
  ['Teams', true, <><circle cx="24" cy="9" r="7" fill="#7b83eb" /><path d="M14 17h22v17a11 11 0 0 1-22 0z" fill="#7b83eb" /><path d="M33 17h13v14q0 8-9 8z" fill="#5059c9" /><rect y="12" width="24" height="24" rx="2" fill="#4b53bc" /><path d="M7 18h10M12 18v13" stroke="#fff" strokeWidth="3" /></>, 'badge'],
  ['Revu', true, <><circle cx="24" cy="24" r="23" fill="#0f9be8" /><path d="M9 34Q5 12 24 6q16-2 13 9-4 11-20 13l8 17" stroke="#fff" strokeWidth="6" fill="none" /></>],
];

function WindowsBar() {
  return (
    <Taskbar>
      {apps.map(([name, running, art, extra]) => (
        <AppButton key={name} aria-label={name} $running={running} $active={extra === 'active'}>
          <svg width="48" height="48" viewBox="0 0 48 48" aria-hidden="true">{art}</svg>
          {extra === 'badge' && <Count>3</Count>}
        </AppButton>
      ))}
      <Tray>
        <TrayButton $width={64} aria-label="Hidden icons"><Icon size={26} w={2.4}><path d="M3 16l9-9 9 9" /></Icon></TrayButton>
        <TrayButton $width={64} aria-label="OneDrive"><Icon size={34}><g stroke="none"><path d="M6 19a5.500 5.500 0 0 1-1-11 7 7 0 0 1 13 1 5 5 0 0 1 1 10z" fill="#0f78d4" /><path d="M4 18l12-8a5 5 0 0 1 4 9H6z" fill="#2fa5ee" /></g></Icon></TrayButton>
        <TrayButton $width={64} $lit aria-label="Microphone"><Icon size={36} w={1.6}><rect x="8" y="1" width="8" height="15" rx="4" fill="currentColor" /><path d="M5 12a7 7 0 0 0 14 0M12 19v4" /></Icon></TrayButton>
        <TrayButton $width={48} aria-label="Wi-Fi"><Icon size={34} w={1.8}><path d="M1 9a16 16 0 0 1 22 0M4.500 13a11 11 0 0 1 15 0M8 16.500a6 6 0 0 1 8 0" /><circle cx="12" cy="20" r="1.500" fill="currentColor" /></Icon></TrayButton>
        <TrayButton $width={48} aria-label="Volume"><Icon size={34} w={1.8}><path d="M1 9h4l5-5v16l-5-5H1zM13.500 9q2 3 0 6M17 6q4 6 0 12M20 3q6 9 0 18" /></Icon></TrayButton>
        <TrayButton $width={48} aria-label="Battery"><Icon size={34} w={1.8}><rect x="2" y="6" width="18" height="14" rx="3" /><path d="M7 9h10v8H5v-3z" fill="currentColor" /><path d="M22 11v4" strokeWidth="3" /><path d="M6 1L1 9h4l-2 6 6-8H5z" fill="currentColor" stroke="#1c2f18" strokeWidth="1" /></Icon></TrayButton>
        <Clock>{'9:52 AM\n3/11/2025'}</Clock>
        <TrayButton $width={44} aria-label="Notifications"><Icon size={34} ><g stroke="none" fill="currentColor"><path d="M2 18l2-3V9a7 7 0 0 1 14 0v6l2 3z" /><path d="M8 20h6a3 3 0 0 1-6 0z" /></g><path d="M8.500 9h5l-5 6h5" stroke="#1c2f18" strokeWidth="1.800" /><path d="M18 2h5l-5 6h5" stroke="#1c2f18" strokeWidth="5" /><path d="M18 2h5l-5 6h5" stroke="currentColor" strokeWidth="1.800" /></Icon></TrayButton>
      </Tray>
    </Taskbar>
  );
}

export default function App() {
  return (
    <Screen>
      <GlobalStyle />
      <Browser />
      <AppArea>
        <TopNav />
        <Columns>
          <JobList />
          <Main>
            <Summary>
              <dl><dt>Estimated Profit</dt><dd>$57,655.00</dd></dl>
              <Icon size={40} w={1.8}><circle cx="12" cy="12" r="11" /><path d="M12 10.500V17M12 7.200v.2" strokeWidth="2" /></Icon>
            </Summary>
            <Actions><Primary $padding={26} $bg="#043184" $fg="#a0a9b9">Build Proposal</Primary></Actions>
            <Workspace><Estimate /><Tools /></Workspace>
          </Main>
        </Columns>
        <PurchaseOrders />
        <PermissionWizard />
      </AppArea>
      <WindowsBar />
    </Screen>
  );
}
